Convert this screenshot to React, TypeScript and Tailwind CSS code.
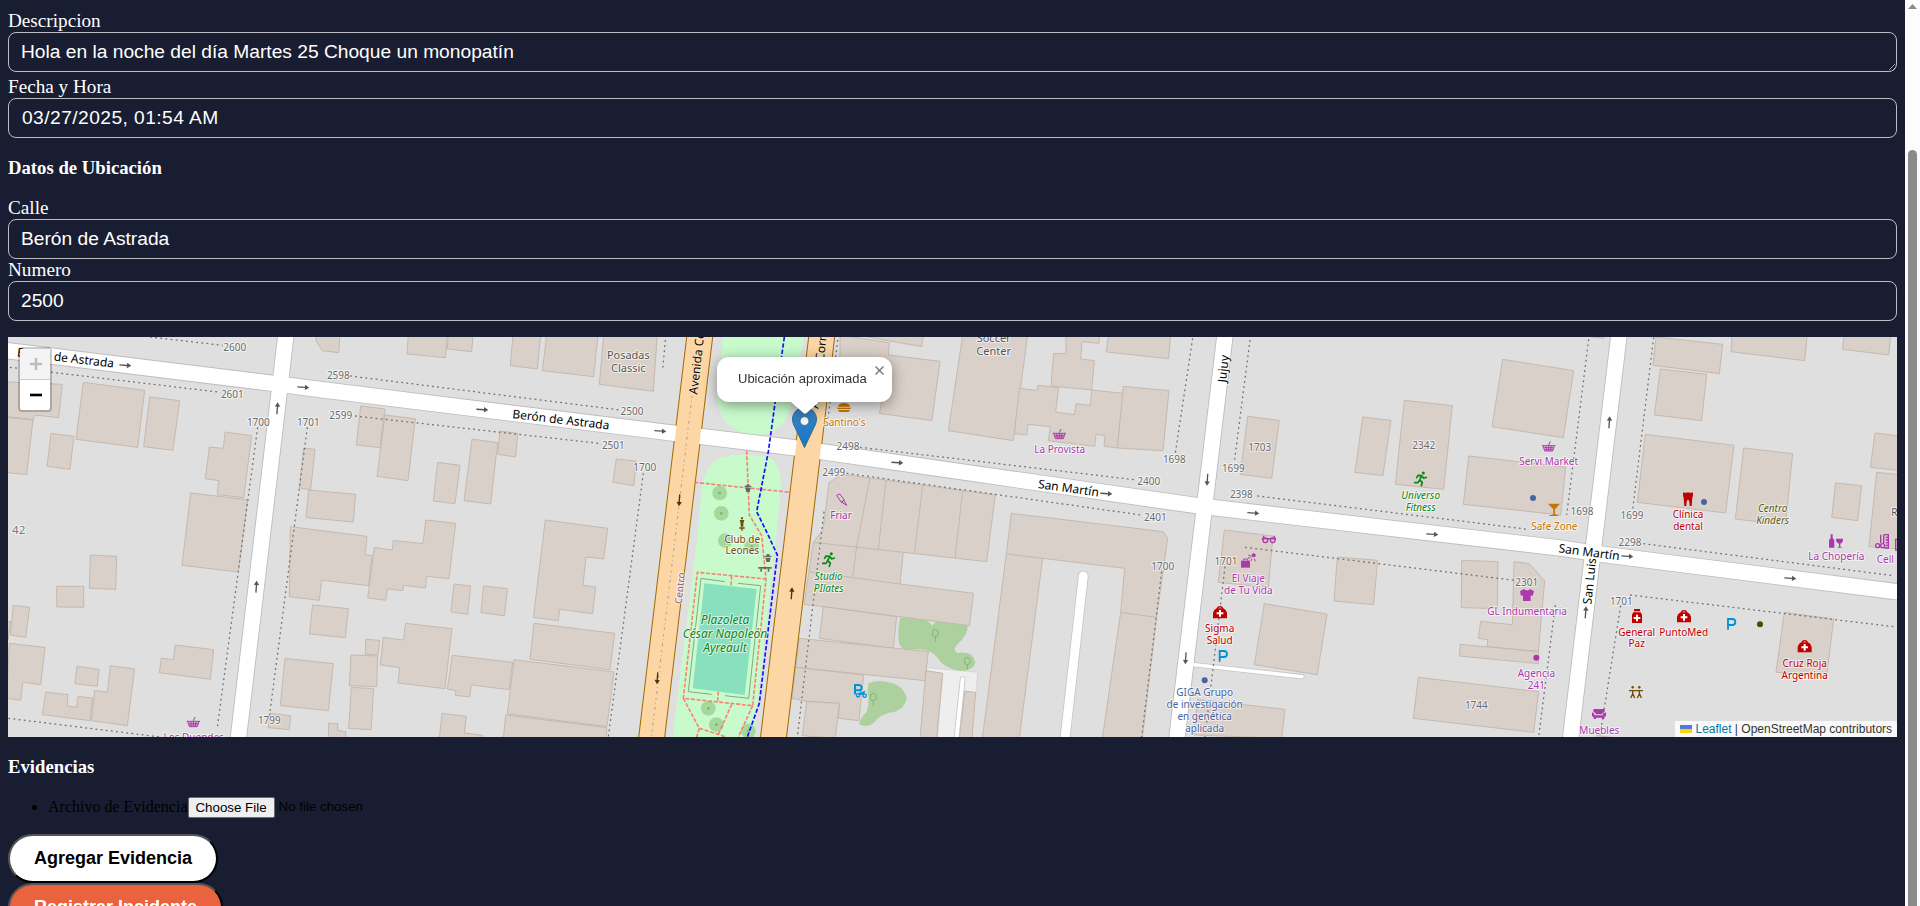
import type { ReactNode } from 'react';

const NOTO = "'Noto Sans', sans-serif";

/* The map is drawn in strips; each strip uses units of a third of a pixel. */
function Strip({ x, children }: { x: number; children: ReactNode }) {
  return <g transform={`translate(${x} 330) scale(0.333333)`}>{children}</g>;
}

const buildings: { x: number; shapes: string[] }[] = [
  {
    x: 0,
    shapes: [
      '20,156 187,163 176,263 103,255 100,269 20,260',
      '20,262 99,270 80,434 20,428',
      '250,157 434,181 413,352 228,328',
      '449,201 539,212 519,361 431,350',
      '153,310 222,319 210,418 141,409',
      '675,306 755,317 731,503 652,494 656,452 616,446 628,351 670,355',
      '572,489 743,509 715,726 546,706',
      '271,675 350,679 347,778 268,775',
      '170,769 251,769 251,832 170,831',
      '40,826 89,832 77,922 31,915',
      '20,873 32,875 24,930',
      '28,940 135,952 122,1064 69,1057 62,1111 20,1105',
      '137,1086 204,1094 202,1128 230,1132 234,1099 278,1104 271,1172 127,1154',
      '331,1007 404,1017 382,1187 274,1172 284,1082 322,1086',
      '231,1009 297,1018 292,1069 225,1061',
      '526,945 641,959 631,1048 478,1028 484,985 520,989',
      '948,15 948,32 967,62 1016,68 1020,15',
      '1082,228 1155,237 1140,353 1069,345',
      '1155,255 1246,266 1224,452 1131,439',
      '911,354 945,358 932,479 898,474',
      '926,480 1067,493 1060,576 918,563',
      '871,590 1101,619 1096,674 1117,677 1106,767 965,751 958,811 868,800',
      '938,825 1045,836 1036,923 928,912',
      '1097,928 1139,931 1134,975 1096,973',
      '1053,975 1133,978 1130,1070 1048,1067',
      '1054,1072 1121,1076 1113,1199 1046,1195',
      '855,985 1000,1001 985,1142 841,1127',
      '809,1150 872,1157 868,1199 805,1193',
      '986,1179 1013,1181 1013,1201 1037,1205 1037,1225 985,1225',
    ],
  },
  {
    x: 320,
    shapes: [
      '265,15 261,72 376,83 383,15',
      '385,15 382,57 455,65 459,15',
      '579,15 571,107 652,117 662,15',
      '680,15 667,122 821,140 834,15',
      '851,15 838,163 1000,184 1012,15',
      '456,327 533,338 512,522 432,512',
      '540,303 593,310 587,381 533,373',
      '353,397 420,406 405,521 340,513',
      '889,387 948,393 942,467 879,457',
      '163,652 217,660 220,631 309,641 317,570 407,580 387,746 320,739 316,774 251,766 249,782 203,777 197,811 143,804',
      '402,762 452,768 443,853 393,846',
      '490,768 563,776 553,857 483,848',
      '676,570 863,595 851,687 798,681 789,766 827,771 818,851 719,838 715,872 640,862',
      '642,880 884,910 870,1019 630,988',
      '582,989 882,1026 861,1190 562,1152',
      '557,1155 861,1193 858,1225 550,1225',
      '397,976 578,997 567,1079 454,1065 449,1101 406,1096 408,1082 382,1077',
      '257,880 396,896 375,1076 234,1059 239,1013 181,1005 190,922 250,930',
      '366,1150 439,1159 433,1209 488,1216 488,1225 358,1225',
    ],
  },
  {
    x: 640,
    shapes: [
      '652,15 845,50 850,15',
      '600,15 748,38 745,75 900,94 876,272 718,250 725,216 600,200',
      '968,15 925,302 1120,332 1138,200 1163,15',
      '567,458 605,433 720,448 1066,495 1040,695 790,667 780,762 1001,790 988,887 492,823 520,637 549,600',
      '550,830 770,860 760,955 538,925',
      '478,925 865,965 855,1052 467,1012',
      '467,1012 671,1035 657,1172 595,1165 598,1120 500,1114 456,1105',
      '500,1114 598,1120 586,1225 487,1217',
      '858,1022 908,1030 890,1225 840,1225',
      '975,1083 1007,1087 996,1225 958,1225',
    ],
  },
  {
    x: 960,
    shapes: [
      '318,15 318,72 281,70 273,168 395,180 403,92 362,87 366,35 417,40 418,15',
      '178,175 232,181 234,166 296,173 287,246 343,254 348,221 391,226 395,180 490,190 472,354 432,349 435,317 408,313 404,349 265,332 271,290 204,283 200,315 163,311',
      '490,169 627,182 609,362 472,354',
      '445,15 439,66 626,86 632,15',
      '154,550 610,605 623,625 590,862 547,1225 427,1225 482,847 494,715 248,685 178,1225 67,1225 139,672',
    ],
  },
  {
    x: 1200,
    shapes: [
      '73,600 219,618 205,772 55,757',
      '143,259 238,271 215,445 121,433',
      '488,261 573,271 549,437 465,427',
      '613,211 757,227 731,478 586,463',
      '908,88 1121,122 1090,323 876,290',
      '806,378 1097,411 1082,555 790,523',
      '412,681 533,691 521,824 402,813',
      '785,691 894,695 892,836 784,833',
      '942,695 988,701 1034,753 1015,965 862,950 863,929 835,925 842,874 937,884',
      '781,943 1016,965 1015,1001 778,978',
      '193,821 381,852 352,1034 163,1004',
      '655,1042 1016,1085 1001,1207 640,1165',
      '-8,1108 255,1138 245,1225 -18,1215',
    ],
  },
  {
    x: 1500,
    shapes: [
      '275,15 275,21 311,25 312,15',
      '468,21 668,43 658,131 459,106',
      '481,117 620,133 605,272 463,255',
      '436,313 702,346 677,549 412,517',
      '731,354 878,371 856,585 706,567',
      '696,15 693,65 914,92 922,15',
      '1032,15 1028,58 1166,75 1172,15',
      '1125,309 1200,318 1200,422 1111,412',
      '1130,427 1200,434 1200,657 1107,650',
      '1007,459 1085,467 1073,572 995,562',
      '853,847 1001,867 980,1038 828,1027',
      '292,1216 350,1225 290,1225',
    ],
  },
];

const walls: [number, string][] = [
  [640, 'M690,442L650,650L638,740M738,452L715,657M848,468L823,670M968,483L945,685M520,637L790,667M508,725L780,762'],
  [960, 'M139,672L248,685M482,847L590,862'],
];

const dotted: [number, string][] = [
  [0, 'M450,21L668,46M30,112L662,187M773,292L652,1192M922,292L808,1160M25,1165L480,1221'],
  [320, 'M90,138L900,240M105,258L845,341M970,430L865,1221M1036,30L1028,120'],
  [640, 'M593,30L563,275M660,352L1490,450M620,430L1510,556M552,545L472,1221'],
  [960, 'M698,25L645,375M870,30L823,395M605,725L545,1221M795,710L735,1221'],
  [1200, 'M172,498L985,598M135,652L945,751M1066,825L1016,1221'],
  [1500, 'M266,28L200,555M461,22L398,540M430,641L1180,737M390,795L1180,890M362,827L300,1215'],
];

const MAIN_STREET = 'M0,349.8 L273,383.3 L320,389.5 L675,433.3 L795,447.8 L970,473 L1197,505.7 L1560,548 L1600,554 L1910,593.4';
const SIDE_STREETS = 'M286.4,331 L237.8,743 M1225.5,331 L1176.3,743 M1619.5,331 L1570,743';
const AVENUES = 'M700.4,331 L651,743 M822.4,331 L772.8,743';

type Label = [number, number, string, string?];

const GREY = '#6a6a6a';
const SHOP = '#ac39ac';
const FOOD = '#c77400';
const HEALTH = '#bf0000';
const SPORT = '#0d8517';
const OFFICE = '#4863a0';
const BROWN = '#734a08';

const labels: { x: number; items: Label[] }[] = [
  {
    x: 0,
    items: [
      [704, 63, '2600'], [697, 204, '2601'], [1015, 146, '2598'], [1022, 267, '2599'],
      [775, 289, '1700'], [925, 287, '1701'], [808, 1182, '1799'], [581, 1234, 'Los Duendes', SHOP],
    ],
  },
  { x: 320, items: [[936, 256, '2500'], [880, 357, '2501'], [974, 422, '1700']] },
  {
    x: 640,
    items: [
      [624, 361, '2498'], [581, 439, '2499'], [613, 287, "Santino's", FOOD], [603, 567, 'Friar', SHOP],
      [307, 638, 'Club de', BROWN], [307, 673, 'Leones', BROWN],
    ],
  },
  {
    x: 960,
    items: [
      [299, 368, 'La Provista', SHOP], [643, 399, '1698'], [820, 425, '1699'], [566, 466, '2400'], [586, 574, '2401'],
      [844, 505, '2398'], [608, 720, '1700'], [798, 706, '1701'], [865, 756, 'El Viaje', SHOP], [865, 792, 'de Tu Vida', SHOP],
      [779, 905, 'Sigma', HEALTH], [779, 941, 'Salud', HEALTH],
      [734, 1098, 'GIGA Grupo', OFFICE], [734, 1134, 'de investigación', OFFICE], [734, 1169, 'en genética', OFFICE], [734, 1205, 'aplicada', OFFICE],
    ],
  },
  {
    x: 1200,
    items: [
      [179, 364, '1703'], [671, 357, '2342'], [980, 769, '2301'], [829, 1136, '1744'],
      [981, 855, 'GL Indumentaria', SHOP], [1009, 1041, 'Agencia', SHOP], [1009, 1077, '241', SHOP],
    ],
  },
  {
    x: 1500,
    items: [
      [146, 406, 'Servi Market', SHOP], [163, 601, 'Safe Zone', FOOD], [246, 556, '1698'], [396, 566, '1699'], [390, 647, '2298'],
      [364, 825, '1701'], [564, 564, 'Clínica', HEALTH], [564, 600, 'dental', HEALTH], [1009, 691, 'La Chopería', SHOP],
      [1156, 699, 'Cell', SHOP], [410, 917, 'General', HEALTH], [410, 952, 'Paz', HEALTH], [551, 917, 'PuntoMed', HEALTH],
      [914, 1012, 'Cruz Roja', HEALTH], [914, 1047, 'Argentina', HEALTH], [298, 1211, 'Muebles', SHOP], [1183, 557, 'R', '#555555'],
    ],
  },
];

function Halo({ x, y, children, size = 30, fill = GREY, italic = false, rotate = 0, anchor = 'middle', halo = 6 }: {
  x: number; y: number; children: string; size?: number; fill?: string; italic?: boolean; rotate?: number; anchor?: 'start' | 'middle'; halo?: number;
}) {
  return (
    <text
      transform={`translate(${x} ${y}) rotate(${rotate})`}
      fontSize={size}
      fontFamily={NOTO}
      fontStyle={italic ? 'italic' : 'normal'}
      textAnchor={anchor}
      fill={fill}
      stroke="#ffffff"
      strokeOpacity={0.65}
      strokeWidth={halo}
      strokeLinejoin="round"
      paintOrder="stroke"
    >
      {children}
    </text>
  );
}

function Arrow({ x, y, r, c = '#555555' }: { x: number; y: number; r: number; c?: string }) {
  return (
    <g transform={`translate(${x} ${y}) rotate(${r})`} fill={c}>
      <path d="M-18,-2 H5 V-8 L18,0 L5,8 V2 H-18Z" />
    </g>
  );
}

function Basket({ x, y }: { x: number; y: number }) {
  return (
    <g transform={`translate(${x} ${y})`} stroke={SHOP} fill="none" strokeWidth={3}>
      <path d="M-20,-3 H20 M-17,-3 L-12,13 H12 L17,-3 M-15,3 H15 M-13,8 H13 M-8,-3 L-6,13 M0,-3 V13 M8,-3 L6,13 M0,-5 L5,-16" />
    </g>
  );
}

function Medical({ x, y }: { x: number; y: number }) {
  return (
    <g transform={`translate(${x} ${y})`}>
      <path d="M-21,18 V2 Q-19,-8 -10,-12 Q-8,-19 0,-19 Q8,-19 10,-12 Q19,-8 21,2 V18Z" fill={HEALTH} />
      <path d="M-6,-12 Q0,-17 6,-12Z M-3,-7 H3 V0 H10 V6 H3 V13 H-3 V6 H-10 V0 H-3Z" fill="#ffffff" />
    </g>
  );
}

function Runner({ x, y }: { x: number; y: number }) {
  return (
    <g transform={`translate(${x} ${y})`} stroke={SPORT} fill="none" strokeWidth={5} strokeLinecap="round" strokeLinejoin="round">
      <circle cx="8" cy="-17" r="4.5" fill={SPORT} stroke="none" />
      <path d="M-12,-3 L-8,-10 L3,-9 L9,-1 L17,-4 M3,-9 L-3,4 L5,11 L2,21 M-3,4 L-8,12 L-18,12" />
    </g>
  );
}

function Parking({ x, y }: { x: number; y: number }) {
  return <path transform={`translate(${x} ${y})`} d="M-10,17 V-15 H3 Q12,-15 12,-6 Q12,3 3,3 H-9" fill="none" stroke="#0092da" strokeWidth={5.5} />;
}

function Tree({ x, y }: { x: number; y: number }) {
  return (
    <g>
      <circle cx={x} cy={y} r="22" fill="#a5d89d" />
      <circle cx={x} cy={y} r="4" fill="#7fb077" />
    </g>
  );
}

function LoneTree({ x, y }: { x: number; y: number }) {
  return (
    <g fill="none" stroke="#83b575" strokeWidth={3}>
      <ellipse cx={x} cy={y} rx="9" ry="11" />
      <path d={`M${x},${y + 11}v15`} />
    </g>
  );
}

function StreetMap() {
  return (
    <svg viewBox="8 337 1889 400" className="block h-[400px] w-full">
      <rect x="8" y="337" width="1889" height="400" fill="#dfdfdf" />

      <Strip x={640}>
        <path d="M250,15 H493 L458,215 Q440,300 365,314 Q300,318 262,280 Q228,245 232,200Z" fill="#c8facc" />
        <path d="M172,615 L186,470 Q198,405 240,383 Q320,362 398,387 Q428,425 422,480 L408,625 L340,1225 L98,1225Z" fill="#c8facc" />
        <path d="M862,1013 L1013,1027 L1008,1090 L970,1085 L958,1225 H892 L908,1030 L858,1022Z" fill="#eeeeee" stroke="#d5cccc" strokeWidth="2" />
        <path d="M780,863 L850,865 Q870,875 875,887 Q900,862 925,876 L983,887 Q985,915 950,945 Q935,965 955,969 Q1000,962 1006,998 Q1000,1023 960,1023 Q910,1015 890,980 Q870,960 840,958 L800,960 Q775,955 775,925 Q775,885 780,863Z" fill="#add19e" />
        <path d="M685,1060 Q715,1047 745,1057 Q790,1065 800,1105 Q795,1135 765,1145 Q720,1150 700,1180 Q680,1195 657,1182 Q660,1165 680,1145 Q690,1115 682,1085Z" fill="#add19e" />
        <path d="M193,760 L350,777 L314,1095 L158,1075Z" fill="#88e0be" />
        <path d="M254,755 L183,745 L145,1085 L215,1093 M294,760 L362,767 L326,1105 L255,1097" fill="none" stroke="#7fa985" strokeWidth="3" />
      </Strip>

      {buildings.map((group) => (
        <Strip key={group.x} x={group.x}>
          {group.shapes.map((points) => (
            <polygon key={points} points={points} fill="#d9d0c9" stroke="#c3b4a8" strokeWidth="2.6" />
          ))}
        </Strip>
      ))}
      {walls.map(([x, d]) => (
        <Strip key={x} x={x}>
          <path d={d} fill="none" stroke="#c3b4a8" strokeWidth="2.6" />
        </Strip>
      ))}

      <g fill="none">
        <path d="M1083.3,576 L1064.5,743" stroke="#c4c4c4" strokeWidth="10.6" strokeLinecap="round" />
        <path d="M1083.3,576 L1064.5,743" stroke="#ffffff" strokeWidth="9" strokeLinecap="round" />
        <path d="M962.7,679 L956,743" stroke="#c4c4c4" strokeWidth="5.6" strokeLinecap="round" />
        <path d="M962.7,679 L956,743" stroke="#ffffff" strokeWidth="4" strokeLinecap="round" />
        <path d="M1188,664 L1302,676.7" stroke="#c4c4c4" strokeWidth="5.2" strokeLinecap="round" />
        <path d={MAIN_STREET} stroke="#bdbdbd" strokeWidth="17.2" />
        <path d={SIDE_STREETS} stroke="#bdbdbd" strokeWidth="17.2" />
        <path d={AVENUES} stroke="#a06b00" strokeWidth="26.8" />
        <path d={MAIN_STREET} stroke="#ffffff" strokeWidth="15.4" />
        <path d={SIDE_STREETS} stroke="#ffffff" strokeWidth="15.4" />
        <path d="M1188,664 L1302,676.7" stroke="#ffffff" strokeWidth="3.6" strokeLinecap="round" />
        <path d={AVENUES} stroke="#fcd6a4" strokeWidth="24.8" />
        <path d="M692,396 L651.5,737" stroke="#b79a97" strokeWidth="1" strokeDasharray="2 3 1 3 3 4" />
      </g>

      {dotted.map(([x, d]) => (
        <Strip key={x} x={x}>
          <path d={d} fill="none" stroke="#6e6e6e" strokeWidth="3.8" strokeDasharray="5.5 10" />
        </Strip>
      ))}

      <Strip x={640}>
        <Tree x={239} y={489} />
        <Tree x={244} y={550} />
        <Tree x={256} y={632} />
        <Tree x={335} y={650} />
        <Tree x={205} y={1135} />
        <Tree x={229} y={1184} />
        <Tree x={325} y={1203} />
        <LoneTree x={886} y={909} />
        <LoneTree x={982} y={993} />
        <LoneTree x={700} y={1101} />
        <path
          d="M163,457 L452,487 M320,362 L328,555 L365,617 L378,747 L338,1127 L130,1105 L172,727 L378,747 M275,737 L273,770 M235,1085 L233,1115 M130,1105 L178,1195 L255,1220 M178,1195 L170,1221 M275,1123 L235,1213 M338,1127 L295,1221"
          fill="none"
          stroke="#fa8072"
          strokeWidth="4.8"
          strokeDasharray="12 5"
        />
        <path d="M433,21 L405,220 L385,365 L350,545 L383,612 L412,675 L385,895 L358,1120 L322,1221" fill="none" stroke="#1010fa" strokeWidth="5" strokeDasharray="13 6" />
      </Strip>

      <Strip x={0}>
        <Arrow x={376} y={106} r={5} />
        <Arrow x={910} y={172} r={4} />
        <Arrow x={832} y={235} r={-86} />
        <Arrow x={769} y={770} r={-86} />
        <Halo x={50} y={79} size={36} fill="#000000" rotate={6.6} anchor="start">Berón de Astrada</Halo>
        <Halo x={56} y={612} size={35} fill="#777777">42</Halo>
        <Basket x={580} y={1177} />
      </Strip>
      <Strip x={320}>
        <Arrow x={487} y={239} r={4} />
        <Arrow x={1021} y={303} r={4} />
        <Arrow x={1078} y={511} r={94} c="#4d3500" />
        <Arrow x={1012} y={1045} r={94} c="#4d3500" />
        <Halo x={576} y={264} size={36} fill="#000000" rotate={6.8} anchor="start">Berón de Astrada</Halo>
        <Halo x={1132} y={194} size={36} fill="#000000" rotate={-83.5} anchor="start" halo={2}>Avenida Corrientes</Halo>
        <Halo x={1085} y={823} size={30} fill="#8d618b" rotate={-84} anchor="start">Centro</Halo>
        <Halo x={925} y={87} size={33} fill="#555555">Posadas</Halo>
        <Halo x={925} y={126} size={33} fill="#555555">Classic</Halo>
      </Strip>

      {labels.map((group) => (
        <Strip key={group.x} x={group.x}>
          {group.items.map(([x, y, text, fill]) => (
            <Halo key={`${x}-${y}`} x={x} y={y} fill={fill}>{text}</Halo>
          ))}
        </Strip>
      ))}

      <Strip x={640}>
        <Arrow x={772} y={398} r={4} />
        <Arrow x={455} y={790} r={-86} c="#4d3500" />
        <Halo x={535} y={237} size={36} fill="#000000" rotate={-83.5} anchor="start" halo={2}>Avenida Corrientes</Halo>
        <Halo x={566} y={750} fill={SPORT} italic>Studio</Halo>
        <Halo x={566} y={786} fill={SPORT} italic>PIlates</Halo>
        <Halo x={255} y={881} size={36} fill={SPORT} italic>Plazoleta</Halo>
        <Halo x={255} y={924} size={36} fill={SPORT} italic>César Napoleón</Halo>
        <Halo x={255} y={967} size={36} fill={SPORT} italic>Ayreault</Halo>
        <Runner x={566} y={688} />
        <path d="M594,230 Q596,219 612,219 Q628,219 630,230Z M592,233 H632 V237 H592Z M594,240 H630 Q629,246 622,246 H602 Q595,246 594,240Z" fill={FOOD} />
        <path d="M590,496 L599,492 L613,510 L604,517Z M604,516 L612,511 L620,526Z" fill="none" stroke={SHOP} strokeWidth="3" />
        <path d="M314,467 H334 V472 H314Z M316,474 H332 L329,486 H319Z M320,463 H328 V468 H320Z" fill="#666666" />
        <path d="M374,677 H394 V681 H374Z M376,683 H392 L389,696 H379Z M380,672 H388 V678 H380Z M355,711 H395 V716 H355Z M361,717 H366 V725 H361Z M383,717 H388 V725 H383Z" fill="#666666" />
        <path d="M303,562 H309 V568 H303Z M299,570 H313 L310,580 V590 H302 V580Z M298,592 H314 V596 H298Z M304,596 H308 V602 H304Z" fill={BROWN} />
        <path d="M645,1093 V1065 H657 Q665,1066 665,1073 Q665,1081 657,1081 H645" fill="none" stroke="#0092da" strokeWidth="6" />
        <g fill="none" stroke="#0092da" strokeWidth="4">
          <circle cx="654" cy="1096" r="5" />
          <circle cx="674" cy="1097" r="5" />
          <path d="M655,1092 L668,1092 L674,1083 M660,1087 L669,1091" strokeWidth="5" />
        </g>
      </Strip>

      <Strip x={960}>
        <Halo x={101} y={36} size={33} fill="#555555">Soccer</Halo>
        <Halo x={101} y={75} size={33} fill="#555555">Center</Halo>
        <Halo x={233} y={474} size={36} fill="#000000" rotate={8} anchor="start">San Martín</Halo>
        <Halo x={798} y={158} size={36} fill="#000000" rotate={-84} anchor="start">Jujuy</Halo>
        <Arrow x={439} y={491} r={4} />
        <Arrow x={742} y={449} r={94} />
        <Arrow x={677} y={985} r={94} />
        <Basket x={298} y={313} />
        <Medical x={780} y={847} />
        <Parking x={789} y={978} />
        <circle cx="734" cy="1051" r="9" fill={OFFICE} />
        <g fill="none" stroke={SHOP} strokeWidth="4">
          <circle cx="916" cy="631" r="7" />
          <circle cx="938" cy="631" r="7" />
          <path d="M907,630 L912,617 M947,630 L942,617 M922,628 Q927,624 932,628 M906,626 H948" />
        </g>
        <path d="M843,692 H870 V713 H843Z" fill={SHOP} />
        <path d="M851,692 V687 H863 V692 M865,675 L874,679 M864,684 L872,683 M876,686 L873,693 M883,686 L886,694" fill="none" stroke={SHOP} strokeWidth="3" />
        <circle cx="881" cy="676" r="6" fill={SHOP} />
      </Strip>

      <Strip x={1200}>
        <Arrow x={160} y={549} r={4} />
        <Arrow x={697} y={613} r={4} />
        <Runner x={662} y={446} />
        <Halo x={662} y={507} fill={SPORT} italic>Universo</Halo>
        <Halo x={662} y={543} fill={SPORT} italic>Fitness</Halo>
        <path d="M972,777 Q981,786 990,777 L1002,784 L998,798 L992,796 V813 H969 V796 L963,798 L960,784Z" fill={SHOP} />
        <circle cx="1009" cy="983" r="9" fill={SHOP} />
      </Strip>

      <Strip x={1500}>
        <Halo x={175} y={667} size={36} fill="#000000" rotate={7.4} anchor="start">San Martín</Halo>
        <Halo x={274} y={824} size={36} fill="#000000" rotate={-84} anchor="start">San Luis</Halo>
        <Arrow x={328} y={277} r={-86} />
        <Arrow x={382} y={679} r={4} />
        <Arrow x={871} y={745} r={4} />
        <Arrow x={257} y={847} r={-86} />
        <Basket x={146} y={350} />
        <circle cx="99" cy="504" r="9" fill={OFFICE} />
        <circle cx="612" cy="516" r="9" fill={OFFICE} />
        <circle cx="780" cy="883" r="9" fill="#4c4c00" />
        <path d="M144,521 H180 L165,538 V552 Q166,555 176,556 V558 H148 V556 Q159,555 160,552 V538Z" fill={FOOD} />
        <path d="M549,487 Q556,490 564,487 Q572,490 579,487 Q580,498 577,504 Q576,515 575,528 H569 Q569,510 564,509 Q559,510 559,528 H553 Q552,515 551,504 Q548,498 549,487Z" fill={HEALTH} />
        <Halo x={818} y={546} fill="#5c5c12" italic>Centro</Halo>
        <Halo x={818} y={582} fill="#5c5c12" italic>Kinders</Halo>
        <path d="M992,613 H998 V624 Q1003,628 1003,633 V653 H987 V633 Q987,628 992,624Z M1008,626 H1029 Q1030,637 1021,641 V650 L1027,653 H1011 L1017,650 V641 Q1007,637 1008,626Z" fill={SHOP} />
        <g fill="none" stroke={SHOP} strokeWidth="4">
          <path d="M1142,614 V640 M1151,614 H1165 V654 H1153 M1157,622 H1165 M1157,630 H1165 M1157,638 H1165 M1157,646 H1165 M1151,614 V640" />
          <circle cx="1133" cy="647" r="6" />
          <circle cx="1148" cy="647" r="6" />
          <path d="M1200,628 H1187 V660 H1200" />
        </g>
        <path d="M402,837 H420 V844 H402Z M400,847 H422 L426,854 V879 H396 V854Z" fill={HEALTH} />
        <path d="M408,854 H414 V861 H421 V867 H414 V874 H408 V867 H401 V861 H408Z" fill="#ffffff" />
        <Medical x={552} y={859} />
        <Parking x={694} y={882} />
        <Medical x={914} y={949} />
        <g fill="none" stroke={BROWN} strokeWidth="4">
          <circle cx="398" cy="1072" r="3" fill={BROWN} strokeWidth="2" />
          <circle cx="418" cy="1072" r="3" fill={BROWN} strokeWidth="2" />
          <path d="M387,1082 H429 M398,1081 V1092 L392,1104 M398,1090 L404,1104 M418,1081 V1092 L412,1104 M418,1090 L424,1104" />
        </g>
        <path d="M281,1137 H313 Q316,1142 313,1146 L307,1150 V1153 H287 V1150 L281,1146 Q278,1142 281,1137Z M276,1147 Q282,1147 284,1156 H310 Q312,1147 318,1147 V1158 L313,1162 V1167 H307 L305,1163 H289 L287,1167 H281 V1162 L276,1158Z" fill={SHOP} />
      </Strip>
    </svg>
  );
}

function Marker() {
  return (
    <svg viewBox="0 0 25 41" className="absolute top-[70px] left-[784px] h-[41px] w-[25px]">
      <defs>
        <linearGradient id="pin" x1="0" y1="0" x2="0" y2="1">
          <stop offset="0" stopColor="#3f8bc4" />
          <stop offset="0.75" stopColor="#1f78c4" />
        </linearGradient>
      </defs>
      <path d="M12.5,0.5 C6,0.5 0.5,5.6 0.5,12.3 C0.5,15.3 1.8,18.2 3.2,20.8 L12.5,40.5 L21.8,20.8 C23.2,18.2 24.5,15.3 24.5,12.3 C24.5,5.6 19,0.5 12.5,0.5Z" fill="url(#pin)" stroke="#2e6c97" />
      <circle cx="12.5" cy="14" r="4.3" fill="#ffffff" stroke="#2e6c97" strokeWidth="0.6" />
    </svg>
  );
}

function Popup() {
  return (
    <div className="absolute top-5 left-[709px] w-[175px] drop-shadow-[0_3px_7px_rgba(0,0,0,0.4)]">
      <div className="relative h-[45px] rounded-xl bg-white pl-[21px] font-['Liberation_Sans',sans-serif] text-[13px] leading-[43px] whitespace-nowrap text-[#333]">
        Ubicación aproximada
        <svg viewBox="0 0 9 9" className="absolute top-[8.5px] right-2 h-[9px] w-[9px]" stroke="#757575" strokeWidth="1.4">
          <path d="M0.5,0.5 L8.5,8.5 M8.5,0.5 L0.5,8.5" />
        </svg>
      </div>
      <svg viewBox="0 0 28 12" className="ml-[74px] block h-3 w-7">
        <path d="M0,0 H28 L15,11.5 H13Z" fill="#ffffff" />
      </svg>
    </div>
  );
}

function ZoomControl() {
  return (
    <div className="absolute top-2.5 left-2.5 h-[65px] w-[34px] rounded border-2 border-black/20">
      <div className="flex h-[31px] items-center justify-center rounded-t-[2px] border-b border-[#ccc] bg-[#f4f4f4] pl-px">
        <svg viewBox="0 0 12 12" className="h-3 w-3" stroke="#bbbbbb" strokeWidth="2.4"><path d="M0,6 H12 M6,0 V12" /></svg>
      </div>
      <div className="flex h-[30px] items-center justify-center rounded-b-[2px] bg-white pl-px">
        <svg viewBox="0 0 12 12" className="h-3 w-3" stroke="#000000" strokeWidth="2.6"><path d="M0,6 H12" /></svg>
      </div>
    </div>
  );
}

function Attribution() {
  return (
    <div className="absolute right-0 bottom-0 flex h-4 w-[222px] items-center bg-white/80 pl-[5px] font-['Liberation_Sans',sans-serif] text-xs leading-4 whitespace-nowrap text-[#333]">
      <svg viewBox="0 0 12 8" className="mr-[3.5px] h-2 w-3">
        <path fill="#4C7BE1" d="M0 0h12v4H0z" />
        <path fill="#FFD500" d="M0 4h12v4H0z" />
      </svg>
      <span className="text-[#0078A8]">Leaflet</span>
      <span className="whitespace-pre"> | OpenStreetMap contributors</span>
    </div>
  );
}

const fieldClass =
  "block h-10 w-full rounded-lg border border-[#bcbdc4] bg-transparent px-3 font-['Liberation_Sans',sans-serif] text-[19.2px] leading-[22px] text-white outline-none";

function FieldLabel({ children }: { children: string }) {
  return <label className="block h-[22px] text-[19.2px] leading-[22px]">{children}</label>;
}

function Heading({ children }: { children: string }) {
  return <h3 className="text-[18.72px] leading-[21px] font-bold">{children}</h3>;
}

export default function App() {
  return (
    <div className="flex h-[906px] w-full overflow-hidden bg-[#191d32]">
      <main className="w-[1905px] shrink-0 px-2 pt-[10px] font-['Liberation_Serif',serif] text-white">
        <FieldLabel>Descripcion</FieldLabel>
        <textarea className={`${fieldClass} resize overflow-hidden py-2`} defaultValue="Hola en la noche del día Martes 25 Choque un monopatín" />
        <div className="mt-1">
          <FieldLabel>Fecha y Hora</FieldLabel>
          <input className={`${fieldClass} pl-[13px] tracking-[0.45px]`} defaultValue="03/27/2025, 01:54 AM" />
        </div>
        <div className="pt-[19px] pb-[19px]">
          <Heading>Datos de Ubicación</Heading>
        </div>
        <FieldLabel>Calle</FieldLabel>
        <input className={fieldClass} defaultValue="Berón de Astrada" />
        <FieldLabel>Numero</FieldLabel>
        <input className={fieldClass} defaultValue="2500" />

        <div className="relative mt-4 h-[400px] overflow-hidden">
          <StreetMap />
          <Marker />
          <Popup />
          <ZoomControl />
          <Attribution />
        </div>

        <div className="pt-[19px] pb-[19px]">
          <Heading>Evidencias</Heading>
        </div>
        <ul className="h-[22px] pl-10 text-base leading-[22px] text-black">
          <li className="flex items-center">
            <span className="mr-[11px] -ml-4 h-[5px] w-[5px] rounded-full bg-black" />
            <span>Archivo de Evidencia</span>
            <button className="h-[21px] w-[87px] rounded-[2px] border border-[#6b6b6b] bg-[#efefef] font-['Liberation_Sans',sans-serif] text-[13.333px] leading-[19px]">
              Choose File
            </button>
            <span className="ml-1 font-['Liberation_Sans',sans-serif] text-[13.333px]">No file chosen</span>
          </li>
        </ul>
        <div className="mt-4 flex flex-col items-start font-['Liberation_Sans',sans-serif] text-[18px] leading-[21px] font-bold">
          <button className="h-[49px] rounded-[25px] border-2 border-t-[#555] border-r-black border-b-black border-l-[#555] bg-white px-6 text-black">
            Agregar Evidencia
          </button>
          <button className="h-[49px] rounded-[25px] border-2 border-t-[#555] border-r-black border-b-black border-l-[#555] bg-[#e9633f] px-6 text-white">
            Registrar Incidente
          </button>
        </div>
      </main>
      <aside className="flex w-[15px] flex-col items-center bg-[#fcfcfc] pt-1">
        <svg viewBox="0 0 9 5" className="mr-px h-[5px] w-[9px]"><path d="M4.5,0 L9,5 H0Z" fill="#8b8b8b" /></svg>
        <div className="mt-[141px] mr-px w-[9px] grow rounded-t-full bg-[#8b8b8b]" />
      </aside>
    </div>
  );
}
